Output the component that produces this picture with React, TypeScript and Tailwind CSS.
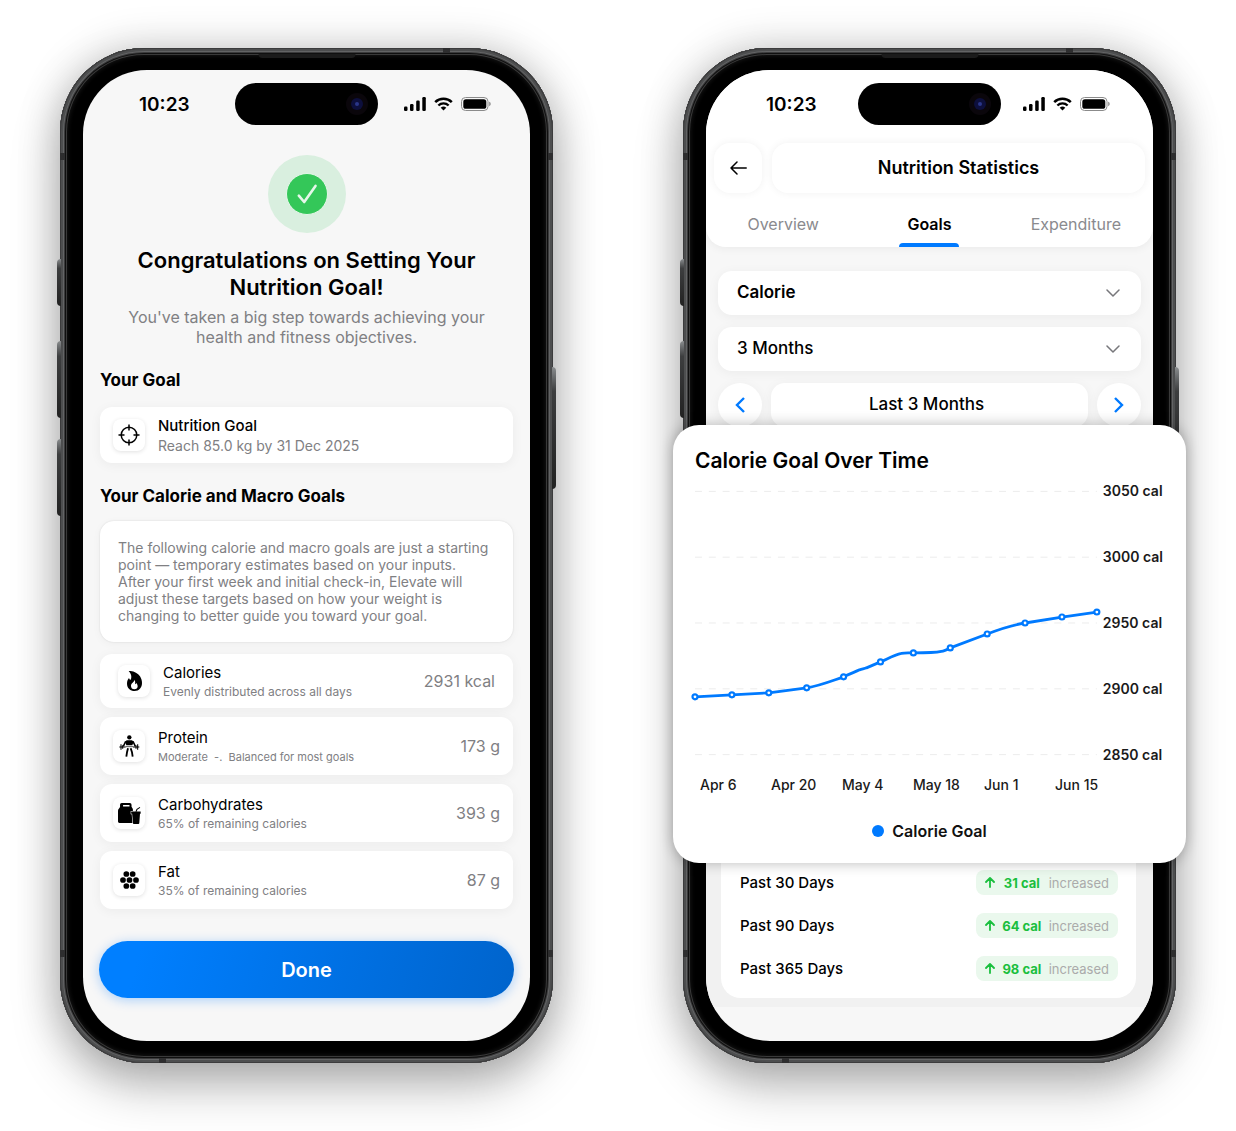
import React from "react";

type StatusBarProps = { timePad: string; iconPad: string };

function StatusBar({ timePad, iconPad }: StatusBarProps) {
  return (
    <div className="grid h-[42px] grid-cols-[1fr_143px_1fr] items-center">
      <span className={`${timePad} pt-0.5 text-[19px] leading-6 font-semibold`}>10:23</span>
      <div className="flex h-[42px] items-center justify-end rounded-full bg-black pr-2.5">
        <span className="flex size-[22px] items-center justify-center rounded-full bg-[#0a060b]">
          <span className="flex size-3 items-center justify-center rounded-full bg-[#0d0f3c]">
            <span className="size-1 rounded-full bg-[#2a3688]" />
          </span>
        </span>
      </div>
      <div className={`${iconPad} flex items-center justify-end gap-2`}>
        <svg width="22" height="14" viewBox="0 0 22 14" fill="#000" aria-hidden="true">
          <rect x="0" y="9.500" width="3.500" height="4.500" rx="1.200" />
          <rect x="6" y="7" width="3.500" height="7" rx="1.200" />
          <rect x="12.200" y="3.500" width="3.500" height="10.500" rx="1.200" />
          <rect x="18.300" y="0" width="3.500" height="14" rx="1.200" />
        </svg>
        <svg width="19" height="14" viewBox="0 0 19 14" fill="none" stroke="#000" aria-hidden="true">
          <path d="M1.2 5.2a11.8 11.8 0 0 1 16.6 0" strokeWidth="2.5" />
          <path d="M4.4 8.5a7.3 7.3 0 0 1 10.2 0" strokeWidth="2.4" />
          <path d="M9.5 13.6 6.7 10.8a4 4 0 0 1 5.6 0z" fill="#000" stroke="none" />
        </svg>
        <svg width="30" height="14" viewBox="0 0 30 14" fill="none" aria-hidden="true">
          <rect x="0.5" y="0.5" width="26.5" height="13" rx="4" stroke="#8b8b8b" />
          <rect x="2.3" y="2.2" width="23" height="9.6" rx="2.6" fill="#000" />
          <path d="M28.3 4.8c1.7.6 1.7 3.8 0 4.4z" fill="#777" />
        </svg>
      </div>
    </div>
  );
}

function Phone({ children, label }: { children: React.ReactNode; label: string }) {
  return (
    <section
      aria-label={label}
      className="relative rounded-[84px] bg-black px-[23px] py-[22px] shadow-[0_24px_48px_rgba(0,0,0,0.26),0_0_44px_rgba(0,0,0,0.2),inset_0_0_0_1px_#3c3c3d,inset_0_0_0_3px_#4d4e4f,inset_0_0_0_4px_#636465,inset_0_0_0_5px_#3b3b3c,inset_0_0_0_6px_#101010,inset_0_0_0_7px_#3a3a3a,inset_0_0_4px_8px_#151515]"
    >
      <span className="absolute top-[211px] -left-[3px] h-[47px] w-1 rounded-l-sm bg-linear-to-b from-[#8a8d8f] via-[#3d3e3f] via-20% to-[#222]" />
      <span className="absolute top-[293px] -left-[3px] h-[77px] w-1 rounded-l-sm bg-linear-to-b from-[#8a8d8f] via-[#3d3e3f] via-20% to-[#222]" />
      <span className="absolute top-[391px] -left-[3px] h-[77px] w-1 rounded-l-sm bg-linear-to-b from-[#8a8d8f] via-[#3d3e3f] via-20% to-[#222]" />
      <span className="absolute top-[319px] -right-[3px] h-[122px] w-1 rounded-r-sm bg-linear-to-b from-[#8a8d8f] via-[#3d3e3f] via-20% to-[#222]" />
      <span className="absolute top-[105px] left-0 h-[7px] w-[5px] bg-[#2e2e2f]" />
      <span className="absolute top-[105px] right-0 h-[7px] w-[5px] bg-[#2e2e2f]" />
      <span className="absolute bottom-[106px] left-0 h-[7px] w-[5px] bg-[#2e2e2f]" />
      <span className="absolute right-0 bottom-[106px] h-[7px] w-[5px] bg-[#2e2e2f]" />
      <span className="absolute top-0 right-[103px] h-[5px] w-[7px] bg-[#2e2e2f]" />
      <span className="absolute bottom-0 left-[99px] h-[5px] w-[7px] bg-[#2e2e2f]" />
      <span className="absolute top-[6px] left-1/2 h-1 w-[97px] -translate-x-1/2 rounded-b-sm bg-[#1b1b1b]" />
      <div className="relative flex h-full flex-col rounded-[64px] bg-[#f7f7f7]">{children}</div>
    </section>
  );
}

const FlameIcon = () => (
  <svg width="15" height="20" viewBox="0 0 45 60" aria-hidden="true">
    <path
      fillRule="evenodd"
      d="M5 0c14-1 27 6 34 16 4 7 6 13 6 20 0 14-9 24-22 24S0 51 0 38c0-7 2-12 6-17 1 3 2 5 4 6 5-6 4-17-5-27zM22 26c1 8-10 9-10 19 0 6 4 10 10 10s10-4 10-9c0-4-2-7-4-10-1 2-2 3-4 4 1-6 1-10-2-14z"
    />
  </svg>
);

const LifterIcon = () => (
  <svg width="21" height="22" viewBox="0 0 63 66" fill="none" stroke="#000" aria-hidden="true">
    <circle cx="31" cy="7" r="6.500" fill="#000" stroke="none" />
    <path d="M23 16h16l5 4-4 11H22l-4-11z" fill="#000" stroke="none" />
    <path d="m20 19-7 15M42 19l7 15" strokeWidth="4.500" />
    <path d="M1 36h19M42 36h19M6 28v16M56 28v16M11 31v10M51 31v10" strokeWidth="3.200" />
    <path d="M20 35h22" strokeWidth="2" />
    <path d="m27 40-3 12-2 13M35 40l4 12 2 13" strokeWidth="5.500" strokeLinejoin="round" />
  </svg>
);

const BagCupIcon = () => (
  <svg width="23" height="21" viewBox="0 0 68 62" aria-hidden="true">
    <path
      fillRule="evenodd"
      d="M11 0h24q5 0 5 5v6l4 7v41H4q-4 0-4-4V23q0-4 3-7l3-4V5q0-5 5-5zm4 6v4h19V6z"
    />
    <path
      d="M39 25h28v7h-2l-2 27q0 3-3 3H47q-3 0-3-3l-2-27h-3z"
      stroke="#fff"
      strokeWidth="3"
      paintOrder="stroke"
    />
    <path d="m53 26 3-7 9-6" fill="none" stroke="#000" strokeWidth="3" />
  </svg>
);

const DotsIcon = () => (
  <svg width="19" height="18" viewBox="0 0 57 54" aria-hidden="true">
    <circle cx="19" cy="9" r="8.6" />
    <circle cx="38" cy="9" r="8.6" />
    <circle cx="9" cy="27" r="8.6" />
    <circle cx="28.5" cy="27" r="8.6" />
    <circle cx="48" cy="27" r="8.6" />
    <circle cx="19" cy="45" r="8.6" />
    <circle cx="38" cy="45" r="8.6" />
  </svg>
);

const TargetIcon = () => (
  <svg width="22" height="22" viewBox="0 0 22 22" fill="none" stroke="#000" strokeWidth="1.5" aria-hidden="true">
    <circle cx="11" cy="11" r="7.8" />
    <path d="M11 .5v6M11 15.500v6M.5 11h6M15.500 11h6" />
  </svg>
);

function IconBox({ children }: { children: React.ReactNode }) {
  return (
    <span className="flex size-8 shrink-0 items-center justify-center rounded-lg bg-white shadow-[0_1px_4px_rgba(0,0,0,0.12)]">
      {children}
    </span>
  );
}

const cardShadow = "shadow-[0_2px_12px_rgba(0,0,0,0.05)]";

const macros = [
  { name: "Calories", note: "Evenly distributed across all days", value: "2931 kcal", icon: <FlameIcon />, row: "h-[54px] px-[18px]", noteSize: "text-[12px]" },
  { name: "Protein", note: "Moderate  -.  Balanced for most goals", value: "173 g", icon: <LifterIcon />, row: "h-[58px] px-[13px]", noteSize: "text-[11px]" },
  { name: "Carbohydrates", note: "65% of remaining calories", value: "393 g", icon: <BagCupIcon />, row: "h-[58px] px-[13px]", noteSize: "text-[12px]" },
  { name: "Fat", note: "35% of remaining calories", value: "87 g", icon: <DotsIcon />, row: "h-[58px] px-[13px]", noteSize: "text-[12px]" },
];

function GoalScreen() {
  return (
    <Phone label="Nutrition goal set">
      <div className="pt-[13px]">
        <StatusBar timePad="pl-[56px]" iconPad="pr-[39px]" />
      </div>
      <div className="flex flex-col px-[17px] pb-[43px]">
        <div className="mt-[30px] flex size-[78px] items-center justify-center self-center rounded-full bg-[#d9efdf]">
          <svg width="42" height="42" viewBox="0 0 42 42" fill="none" aria-hidden="true">
            <circle cx="21" cy="21" r="20.500" fill="#34c759" stroke="#e4f6e8" />
            <path d="m12.800 22.700 5.400 6.300L29.500 12.900" stroke="#e6f7ea" strokeWidth="2.600" strokeLinecap="round" strokeLinejoin="round" />
          </svg>
        </div>
        <h1 className="mt-[14px] text-center text-[22px] leading-[27px] font-semibold">
          Congratulations on Setting Your
          <br />
          Nutrition Goal!
        </h1>
        <p className="mt-[6px] text-center text-[16px] leading-5 text-[#808083]">
          You've taken a big step towards achieving your
          <br />
          health and fitness objectives.
        </p>
        <h2 className="mt-[21px] text-[17px] leading-6 font-bold">Your Goal</h2>
        <div className={`mt-[15px] flex h-14 items-center gap-[13px] rounded-xl bg-white px-[13px] ${cardShadow}`}>
          <IconBox>
            <TargetIcon />
          </IconBox>
          <div className="pt-px">
            <p className="text-[15px] leading-5 font-medium">Nutrition Goal</p>
            <p className="text-[14px] leading-5 text-[#808083]">Reach 85.0 kg by 31 Dec 2025</p>
          </div>
        </div>
        <h2 className="mt-[21px] text-[17px] leading-6 font-bold">Your Calorie and Macro Goals</h2>
        <div className="mt-[13px] flex h-[121px] items-center rounded-[14px] bg-white px-[18px] text-[14px] leading-[17px] text-[#808083] shadow-[0_0_2px_rgba(0,0,0,0.12),0_2px_10px_rgba(0,0,0,0.04)]">
          <p>
            The following calorie and macro goals are just a starting
            <br />
            point — temporary estimates based on your inputs.
            <br />
            After your first week and initial check-in, Elevate will
            <br />
            adjust these targets based on how your weight is
            <br />
            changing to better guide you toward your goal.
          </p>
        </div>
        <ul className="mt-3 flex flex-col gap-[9px]">
          {macros.map((m) => (
            <li key={m.name} className={`flex items-center gap-[13px] rounded-xl bg-white ${cardShadow} ${m.row}`}>
              <IconBox>{m.icon}</IconBox>
              <div className="flex-1 pt-0.5">
                <p className="text-[15px] leading-5">{m.name}</p>
                <p className={`${m.noteSize} leading-[18px] whitespace-pre text-[#808083]`}>{m.note}</p>
              </div>
              <span className="text-[16px] leading-5 text-[#808083]">{m.value}</span>
            </li>
          ))}
        </ul>
        <button
          type="button"
          className="mt-8 -mr-px -ml-px h-[57px] rounded-full bg-linear-105 from-[#007fff] from-10% to-[#0064cc] pt-px text-[20px] font-semibold text-white shadow-[0_2px_12px_rgba(0,122,255,0.32)]"
        >
          Done
        </button>
      </div>
    </Phone>
  );
}

function Select({ label, options, weight }: { label: string; options: string[]; weight: string }) {
  return (
    <div className="relative">
      <select
        aria-label={label}
        className={`block h-11 w-full appearance-none rounded-[14px] bg-white px-[19px] text-[17px] ${weight} ${cardShadow}`}
      >
        {options.map((o) => (
          <option key={o}>{o}</option>
        ))}
      </select>
      <svg
        className="pointer-events-none absolute top-1/2 right-[21px] -translate-y-1/2"
        width="14"
        height="8"
        viewBox="0 0 14 8"
        fill="none"
        stroke="#77777b"
        strokeWidth="1.500"
        strokeLinecap="round"
        strokeLinejoin="round"
        aria-hidden="true"
      >
        <path d="m1 1 6 6 6-6" />
      </svg>
    </div>
  );
}

const points: [number, number][] = [
  [0, 206], [37, 204], [74, 202], [112, 197], [149, 186], [186, 171],
  [219, 162], [256, 157], [293, 143], [331, 132], [368, 126], [403, 121],
];

const gridLines = [0, 66, 132, 198, 264];
const yLabels = ["3050 cal", "3000 cal", "2950 cal", "2900 cal", "2850 cal"];
const xLabels = ["Apr 6", "Apr 20", "May 4", "May 18", "Jun 1", "Jun 15"];

function ChartCard() {
  return (
    <div className="relative z-10 -mx-[33px] -mt-[2px] rounded-[26px] bg-white pt-[22px] pb-5 shadow-[0_0_14px_rgba(0,0,0,0.28)]">
      <h2 className="px-[22px] text-[21px] leading-7 font-semibold">Calorie Goal Over Time</h2>
      <div className="mt-[6px] flex items-center gap-1.5 pr-[23px] pl-[22px]">
        <svg className="h-[264px] min-w-0 flex-1 overflow-visible" viewBox="0 0 403 264" fill="none" role="img" aria-label="Calorie goal by week">
          {gridLines.map((y) => (
            <path key={y} d={`M0 ${y}H403`} stroke="#ececec" strokeDasharray="7 6.860" />
          ))}
          <path
            d="M0 206 37 204 74 202 112 197C125 195 137 190 149 186C155 183 161 181 165 179C168 178 170 178 172 177L186 171C193 168 200 164 207 162.500C211 161.500 215 162 219 162C230 162 240 162 247 160.500C250 160 253 158.500 256 157L293 143C306 138 318 134 331 132L368 126 403 121"
            stroke="#007aff"
            strokeWidth="2.800"
            strokeLinejoin="round"
          />
          {points.map(([x, y]) => (
            <circle key={x} cx={x} cy={y} r="2.500" fill="#fff" stroke="#007aff" strokeWidth="2.200" />
          ))}
        </svg>
        <ul className="flex h-[284px] flex-col justify-between">
          {yLabels.map((l) => (
            <li key={l} className="text-[14px] leading-5 font-semibold whitespace-nowrap text-[#1a1a1a]">
              {l}
            </li>
          ))}
        </ul>
      </div>
      <ul className="mt-2.5 grid grid-cols-6 pr-[60px] pl-[27px]">
        {xLabels.map((l) => (
          <li key={l} className="text-[14px] leading-5 font-medium whitespace-nowrap text-[#1a1a1a]">
            {l}
          </li>
        ))}
      </ul>
      <p className="mt-6 flex items-center justify-center gap-2 text-[16px] leading-6 font-semibold text-[#111]">
        <span className="size-3 rounded-full bg-[#007aff]" />
        Calorie Goal
      </p>
    </div>
  );
}

const tabs = ["Overview", "Goals", "Expenditure"];

const changes = [
  { period: "Past 30 Days", amount: "31 cal" },
  { period: "Past 90 Days", amount: "64 cal" },
  { period: "Past 365 Days", amount: "98 cal" },
];

function StatsScreen() {
  return (
    <Phone label="Nutrition statistics">
      <header className="rounded-t-[64px] rounded-b-[20px] bg-white pt-[13px] shadow-[0_2px_8px_rgba(0,0,0,0.05)]">
        <StatusBar timePad="pl-[60px]" iconPad="pr-[43px]" />
        <div className="mt-[18px] flex gap-2.5 px-2">
          <button
            type="button"
            aria-label="Back"
            className="flex h-[50px] w-12 items-center justify-center rounded-[16px] bg-white shadow-[0_0_8px_rgba(0,0,0,0.06)]"
          >
            <svg width="17" height="14" viewBox="0 0 17 14" fill="none" stroke="#000" strokeWidth="1.500" strokeLinecap="round" strokeLinejoin="round" aria-hidden="true">
              <path d="M7 1 1 7l6 6M1 7h15.200" />
            </svg>
          </button>
          <h1 className="flex h-[50px] flex-1 items-center justify-center rounded-[16px] bg-white text-[18px] leading-6 font-semibold shadow-[0_0_8px_rgba(0,0,0,0.06)]">
            Nutrition Statistics
          </h1>
        </div>
        <nav className="grid grid-cols-3 px-1 pt-[21px]">
          {tabs.map((t) => (
            <button
              key={t}
              type="button"
              className={`flex flex-col items-center gap-[9px] text-[16px] leading-5 ${t === "Goals" ? "font-semibold text-black" : "text-[#8a8a8e]"}`}
            >
              {t}
              <span className={`h-1 w-[60px] rounded-t-[4px] ${t === "Goals" ? "bg-[#007aff]" : ""}`} />
            </button>
          ))}
        </nav>
      </header>
      <div className="mt-6 flex flex-col gap-3 px-3">
        <Select label="Nutrient" options={["Calorie", "Protein", "Carbohydrates", "Fat"]} weight="font-semibold" />
        <Select label="Range" options={["3 Months", "6 Months", "1 Year"]} weight="font-medium" />
        <div className="flex gap-[9px]">
          <button type="button" aria-label="Previous period" className={`flex size-11 items-center justify-center rounded-full bg-white ${cardShadow}`}>
            <svg width="10" height="16" viewBox="0 0 10 16" fill="none" stroke="#007aff" strokeWidth="2.400" aria-hidden="true">
              <path d="M9 1 2 8l7 7" />
            </svg>
          </button>
          <p className={`flex h-11 flex-1 items-center justify-center rounded-[14px] bg-white pr-1.5 text-[17px] font-medium ${cardShadow}`}>Last 3 Months</p>
          <button type="button" aria-label="Next period" className={`flex size-11 items-center justify-center rounded-full bg-white ${cardShadow}`}>
            <svg width="10" height="16" viewBox="0 0 10 16" fill="none" stroke="#007aff" strokeWidth="2.400" aria-hidden="true">
              <path d="m1 1 7 7-7 7" />
            </svg>
          </button>
        </div>
      </div>
      <ChartCard />
      <div className="-mt-[2px] overflow-hidden rounded-b-[64px] pb-[34px]">
        <div className="bg-[#f1f1f1] pr-[17px] pb-[9px] pl-[15px]">
          <ul className="rounded-b-[20px] bg-white pr-[18px] pb-2 pl-[19px]">
            {changes.map((c) => (
              <li key={c.period} className="flex h-[43px] items-center justify-between">
                <span className="text-[15px] leading-5 font-medium">{c.period}</span>
                <span className="flex h-[25px] w-[142px] items-center justify-between rounded-lg bg-[#eaf8ed] px-[9px] text-[13px] leading-5 text-[#ababab]">
                  <svg width="10" height="11" viewBox="0 0 10 11" fill="none" stroke="#1abf3e" strokeWidth="1.800" strokeLinecap="round" strokeLinejoin="round" aria-hidden="true">
                    <path d="M5 10V1M1 5l4-4 4 4" />
                  </svg>
                  <span className="font-bold text-[#1abf3e]">{c.amount}</span>
                  <span>increased</span>
                </span>
              </li>
            ))}
          </ul>
        </div>
      </div>
    </Phone>
  );
}

export default function App() {
  return (
    <main className="grid grid-cols-1 gap-[130px] bg-white px-[60px] pt-12 pb-[68px] font-['Inter',sans-serif] text-black lg:grid-cols-2">
      <GoalScreen />
      <StatsScreen />
    </main>
  );
}
